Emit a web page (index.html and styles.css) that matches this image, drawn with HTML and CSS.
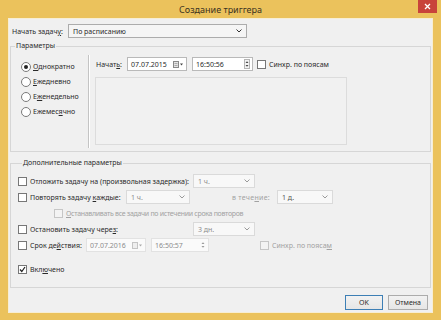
FILE: index.html
```html
<!DOCTYPE html>
<html lang="ru">
<head>
    <meta charset="UTF-8">
    <title>Создание триггера</title>
    <link rel="stylesheet" href="styles.css">
</head>
<body>
<div class="window">
    <div class="titlebar">
        <span class="title">Создание триггера</span>
        <span class="close-btn">
            <svg width="7" height="7" viewBox="0 0 7 7"><path d="M1 1L6 6M6 1L1 6" stroke="#fff" stroke-width="1.3"/></svg>
        </span>
    </div>
    <div class="client">
        <div class="top-row">
            <span class="lbl-task">Начать задач<u>у</u>:</span>
            <div class="combo combo-main">
                <span>По расписанию</span>
                <svg class="chev" width="6" height="4" viewBox="0 0 6 4"><path d="M0.5 0.5L3 3L5.5 0.5" fill="none" stroke="#333" stroke-width="1"/></svg>
            </div>
        </div>

        <!-- Параметры -->
        <fieldset class="group">
            <legend>Параметры</legend>
            <div class="params">
                <div class="radios">
                    <div class="radio checked"><span class="circle"></span><u>О</u>днократно</div>
                    <div class="radio"><span class="circle"></span><u>Е</u>жедневно</div>
                    <div class="radio"><span class="circle"></span>Е<u>ж</u>енедельно</div>
                    <div class="radio"><span class="circle"></span>Ежемес<u>я</u>чно</div>
                </div>
                <div class="schedule">
                    <div class="start-row">
                        <span class="lbl-start">Начат<u>ь</u>:</span>
                        <div class="field date">
                            <span>07.07.2015</span>
                            <svg class="cal" width="11" height="7" viewBox="0 0 11 7"><rect x="0.5" y="0.5" width="5" height="6" fill="#e4e4e4" stroke="#888"/><path d="M1.5 2.5h3M1.5 4.5h3" stroke="#aaa"/><path d="M7 2.5h3L8.5 4.5z" fill="#444"/></svg>
                        </div>
                        <div class="field time">
                            <span>16:50:56</span>
                            <svg class="spin" width="6" height="10" viewBox="0 0 6 10"><rect x="0.5" y="0.5" width="5" height="9" fill="#f2f2f2" stroke="#b5b5b5"/><path d="M1.5 4L3 2.2L4.5 4zM1.5 6L3 7.8L4.5 6z" fill="#444"/></svg>
                        </div>
                        <div class="check"><span class="box"></span>Синхр. по поясам</div>
                    </div>
                    <div class="panel"></div>
                </div>
            </div>
        </fieldset>

        <!-- Дополнительные параметры -->
        <fieldset class="group group-extra">
            <legend>Дополнительные параметры</legend>
            <div class="row">
                <div class="check"><span class="box"></span><span class="lbl-wide">Отложить задачу на <u>(</u>произвольная задержка):</span></div>
                <div class="combo combo-off c-62"><span>1 ч.</span><svg class="chev" width="6" height="4" viewBox="0 0 6 4"><path d="M0.5 0.5L3 3L5.5 0.5" fill="none" stroke="#9a9a9a" stroke-width="1"/></svg></div>
            </div>
            <div class="row">
                <div class="check"><span class="box"></span><span class="lbl-repeat">Повторять задачу <u>к</u>аждые:</span></div>
                <div class="combo combo-off c-64"><span>1 ч.</span><svg class="chev" width="6" height="4" viewBox="0 0 6 4"><path d="M0.5 0.5L3 3L5.5 0.5" fill="none" stroke="#9a9a9a" stroke-width="1"/></svg></div>
                <span class="lbl-during">в тече<u>н</u>ие:</span>
                <div class="combo combo-off c-56"><span class="val-dark">1 д.</span><svg class="chev" width="6" height="4" viewBox="0 0 6 4"><path d="M0.5 0.5L3 3L5.5 0.5" fill="none" stroke="#9a9a9a" stroke-width="1"/></svg></div>
            </div>
            <div class="row">
                <div class="check off sub"><span class="box"></span><span class="sub-text"><u>О</u>станавливать все задачи по истечении срока повторов</span></div>
            </div>
            <div class="row">
                <div class="check"><span class="box"></span><span class="lbl-wide">Остановить задачу чере<u>з</u>:</span></div>
                <div class="combo combo-off c-62"><span>3 дн.</span><svg class="chev" width="6" height="4" viewBox="0 0 6 4"><path d="M0.5 0.5L3 3L5.5 0.5" fill="none" stroke="#9a9a9a" stroke-width="1"/></svg></div>
            </div>
            <div class="row">
                <div class="check"><span class="box"></span><span class="lbl-expire">Срок де<u>й</u>ствия:</span></div>
                <div class="field date field-off">
                    <span>07.07.2016</span>
                    <svg class="cal" width="11" height="7" viewBox="0 0 11 7"><rect x="0.5" y="0.5" width="5" height="6" fill="#eee" stroke="#c4c4c4"/><path d="M7 2.5h3L8.5 4.5z" fill="#aaa"/></svg>
                </div>
                <div class="field time2 field-off">
                    <span>16:50:57</span>
                    <svg class="spin" width="6" height="10" viewBox="0 0 6 10"><path d="M1.5 4L3 2.2L4.5 4zM1.5 6L3 7.8L4.5 6z" fill="#999"/></svg>
                </div>
                <div class="check off sync2"><span class="box"></span>Синхр. по пояса<u>м</u></div>
            </div>
            <div class="row row-enabled">
                <div class="check on"><span class="box">
                    <svg width="7" height="7" viewBox="0 0 7 7"><path d="M1 3.5L2.8 5.5L6 1" fill="none" stroke="#222" stroke-width="1.2"/></svg>
                </span>Вкл<u>ю</u>чено</div>
            </div>
        </fieldset>

        <div class="actions">
            <button class="btn btn-default">OK</button>
            <button class="btn">Отмена</button>
        </div>
    </div>
</div>
</body>
</html>
```

FILE: styles.css
```css
* {
    box-sizing: border-box;
}
body {
    margin: 0;
    font-family: "Noto Sans", "Open Sans", sans-serif;
    font-size: 7px;
    color: #2a2a2a;
    white-space: nowrap;
}
u {
    text-decoration-thickness: 1px;
}
.window {
    width: 441px;
    height: 320px;
    background: #ebc25c;
    padding: 0 8px 7px;
    display: flex;
    flex-direction: column;
}
.titlebar {
    position: relative;
    height: 18px;
    display: flex;
    align-items: center;
    justify-content: center;
}
.title {
    font-size: 9px;
    color: #3b3322;
}
.close-btn {
    position: absolute;
    top: 0;
    right: -4px;
    width: 19px;
    height: 13px;
    background: #c8433b;
    display: flex;
    align-items: center;
    justify-content: center;
}
.client {
    flex: 1;
    background: #f0f0f0;
    border: 1px solid #f7eed4;
}
/* верхняя строка */
.top-row {
    display: flex;
    align-items: center;
    padding: 5px 0 0 3px;
    height: 19px;
}
.lbl-task {
    width: 56px;
}
.combo {
    height: 14px;
    display: flex;
    align-items: center;
    justify-content: space-between;
    padding: 0 4px 0 4px;
    border: 1px solid #acacac;
}
.combo-main {
    width: 179px;
    background: #f5f5f5;
}
.combo-off {
    background: #f8f8f8;
    border-color: #dadada;
    color: #8c8c8c;
}
.c-62 { width: 62px; }
.c-64 { width: 64px; }
.c-56 { width: 56px; }
.val-dark {
    color: #555;
}
/* группы */
.group {
    margin: 3px 1px 0;
    padding: 0;
    border: 1px solid #d6d6d6;
    min-width: 0;
}
.group legend {
    margin-left: 4px;
    padding: 0 1px;
    line-height: 10px;
}
.params {
    display: flex;
    height: 100px;
    padding: 4px 0 3px;
}
.radios {
    width: 77px;
    padding: 4px 0 0 10px;
}
.radio {
    height: 15px;
    display: flex;
    align-items: center;
}
.circle {
    width: 10px;
    height: 10px;
    border: 1px solid #7a7a7a;
    border-radius: 50%;
    background: #fff;
    margin-right: 2px;
    display: flex;
    align-items: center;
    justify-content: center;
}
.radio.checked .circle::after {
    content: "";
    width: 4px;
    height: 4px;
    border-radius: 50%;
    background: #222;
}
.schedule {
    flex: 1;
    border-left: 1px solid #c4c4c4;
    box-shadow: inset 1px 0 #fff;
    padding-left: 7px;
}
.start-row {
    display: flex;
    align-items: center;
    height: 14px;
    margin-top: 2px;
}
.lbl-start {
    width: 31px;
}
.field {
    height: 14px;
    background: #fff;
    border: 1px solid #b9b9b9;
    display: flex;
    align-items: center;
    justify-content: space-between;
    padding: 0 2px 0 3px;
}
.field.date {
    width: 60px;
    margin-right: 5px;
}
.field.time {
    width: 61px;
    margin-right: 4px;
}
.field.time2 {
    width: 58px;
}
.field-off {
    background: #fafafa;
    border-color: #e2e2e2;
    color: #8c8c8c;
}
.check {
    display: flex;
    align-items: center;
}
.box {
    width: 9px;
    height: 9px;
    border: 1px solid #777;
    background: #fff;
    margin-right: 3px;
    display: flex;
    align-items: center;
    justify-content: center;
    flex: none;
}
.check.off {
    color: #a2a2a2;
}
.check.off .box {
    border-color: #c6c6c6;
    background: #f3f3f3;
}
.panel {
    width: 252px;
    height: 68px;
    margin: 6px 0 0 -1px;
    border: 1px solid #dcdcdc;
    background: #f1f1f1;
}
.group-extra {
    margin-top: 6px;
    padding: 5px 0 10px 7px;
}
.row {
    display: flex;
    align-items: center;
    height: 16px;
}
.lbl-wide {
    width: 163px;
}
.lbl-repeat {
    width: 96px;
}
.lbl-expire {
    width: 56px;
}
.lbl-during {
    width: 87px;
    text-align: right;
    padding-right: 7px;
    color: #a2a2a2;
    letter-spacing: 0.3px;
}
.check.sub {
    margin-left: 36px;
}
.sub-text {
    letter-spacing: -0.3px;
}
.check.sync2 {
    margin-left: 51px;
}
.row-enabled {
    margin-top: 8px;
}
.actions {
    display: flex;
    justify-content: flex-end;
    gap: 5px;
    margin: 7px 4px 0 0;
}
.btn {
    width: 40px;
    height: 15px;
    padding: 0;
    font-family: inherit;
    font-size: 7px;
    color: #2a2a2a;
    background: linear-gradient(#f2f2f2, #e6e6e6);
    border: 1px solid #acacac;
}
.btn-default {
    width: 38px;
    border-color: #3d7fb5;
}
```
